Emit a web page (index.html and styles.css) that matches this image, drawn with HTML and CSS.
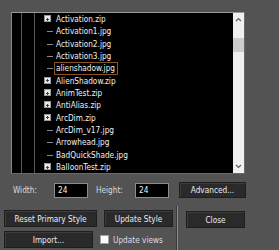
FILE: index.html
```html
<!DOCTYPE html>
<html lang="en">
<head>
    <meta charset="UTF-8">
    <title>Style Browser</title>
    <link rel="stylesheet" href="styles.css">
</head>
<body>
    <div class="panel">
        <div class="listbox">
            <ul class="tree">
                <li class="node folder"><span class="twist"></span><span class="name">Activation.zip</span></li>
                <li class="node"><span class="twist"></span><span class="name">Activation1.jpg</span></li>
                <li class="node"><span class="twist"></span><span class="name">Activation2.jpg</span></li>
                <li class="node"><span class="twist"></span><span class="name">Activation3.jpg</span></li>
                <li class="node selected"><span class="twist"></span><span class="name">alienshadow.jpg</span></li>
                <li class="node folder"><span class="twist"></span><span class="name">AlienShadow.zip</span></li>
                <li class="node folder"><span class="twist"></span><span class="name">AnimTest.zip</span></li>
                <li class="node folder"><span class="twist"></span><span class="name">AntiAlias.zip</span></li>
                <li class="node folder"><span class="twist"></span><span class="name">ArcDim.zip</span></li>
                <li class="node"><span class="twist"></span><span class="name">ArcDim_v17.jpg</span></li>
                <li class="node"><span class="twist"></span><span class="name">Arrowhead.jpg</span></li>
                <li class="node"><span class="twist"></span><span class="name">BadQuickShade.jpg</span></li>
                <li class="node folder"><span class="twist"></span><span class="name">BalloonTest.zip</span></li>
            </ul>
            <div class="scrollbar">
                <svg class="arrow" width="11" height="10" viewBox="0 0 11 10"><path d="M3 6 L5.5 3.5 L8 6" fill="none" stroke="#606060" stroke-width="1.2"/></svg>
                <div class="thumb"></div>
                <svg class="arrow down" width="11" height="10" viewBox="0 0 11 10"><path d="M3 4 L5.5 6.5 L8 4" fill="none" stroke="#606060" stroke-width="1.2"/></svg>
            </div>
        </div>

        <div class="size-row">
            <label class="lbl lbl-width">Width:</label>
            <div class="field">24</div>
            <label class="lbl lbl-height">Height:</label>
            <div class="field">24</div>
            <button class="btn btn-advanced">Advanced...</button>
        </div>

        <div class="actions">
            <div class="actions-left">
                <div class="row">
                    <button class="btn btn-reset">Reset Primary Style</button>
                    <button class="btn btn-update">Update Style</button>
                </div>
                <div class="row row-import">
                    <button class="btn btn-import">Import...</button>
                    <span class="check"></span>
                    <span class="check-label">Update views</span>
                </div>
            </div>
            <div class="separator"></div>
            <button class="btn btn-close">Close</button>
        </div>
    </div>
</body>
</html>
```

FILE: styles.css
```css
body {
    margin: 0;
    background-color: #535353;
    font-family: "DejaVu Sans Condensed", "DejaVu Sans", sans-serif;
    font-stretch: condensed;
    font-size: 8.2px;
    color: #f0f0f0;
    overflow: hidden;
}
.panel {
    padding-top: 12px;
}
.listbox {
    margin-left: 11px;
    width: 234px;
    height: 162px;
    box-sizing: border-box;
    border: 1px solid #6a6a6a;
    border-top-color: #9a9a9a;
    border-left-color: #8a8a8a;
    background-color: #000;
    display: flex;
}
.tree {
    flex: 1;
    list-style: none;
    margin: 0;
    padding: 0;
    background:
        linear-gradient(#585858, #585858) 9px 0 / 1px 100% no-repeat,
        linear-gradient(#585858, #585858) 22px 0 / 1px 100% no-repeat;
    overflow: hidden;
}
.node {
    height: 12.33px;
    line-height: 12.33px;
    padding-left: 32px;
    display: flex;
    align-items: center;
    white-space: nowrap;
}
.twist {
    width: 12px;
    height: 12px;
    flex: none;
    position: relative;
}
.twist::before {
    content: "";
    position: absolute;
    left: 3px;
    top: 6px;
    width: 6px;
    height: 1px;
    background-color: #8a8a8a;
}
.folder .twist::before {
    left: 0;
    top: 2px;
    width: 7px;
    height: 7px;
    box-sizing: border-box;
    background:
        linear-gradient(#3a3a6a, #3a3a6a) 1px 2.5px / 3px 1px no-repeat,
        linear-gradient(#3a3a6a, #3a3a6a) 2px 1.5px / 1px 3px no-repeat,
        #e8e8e8;
    border: 1px solid #9a9a9a;
}
.selected .name {
    border: 1px solid #8a5422;
    margin-left: -2px;
    padding: 0 2px 0 1px;
    line-height: 11px;
}
.scrollbar {
    width: 11px;
    flex: none;
    background-color: #f0f0f0;
    position: relative;
}
.arrow {
    display: block;
    margin-top: 2px;
}
.thumb {
    margin-top: 13px;
    height: 14px;
    background-color: #cdcdcd;
}
.arrow.down {
    position: absolute;
    bottom: 2px;
}
.size-row {
    display: flex;
    align-items: center;
    margin-top: 8px;
    height: 16px;
}
.lbl {
    color: #dadada;
}
.lbl-width {
    margin-left: 13px;
    width: 41px;
}
.lbl-height {
    margin-left: 8px;
    width: 39px;
}
.field {
    width: 34px;
    height: 15px;
    box-sizing: border-box;
    background-color: #000;
    border: 1px solid #8c8c8c;
    padding-left: 3px;
    line-height: 13px;
    color: #f0f0f0;
}
.btn {
    font: inherit;
    color: #eaecf4;
    background-color: #2a2a2a;
    border: 1px solid #1e1e1e;
    box-shadow: inset 1px 1px 0 #3c3c3c;
    height: 17px;
    padding: 0;
    box-sizing: border-box;
    cursor: pointer;
}
.btn:hover {
    background-color: #333;
}
.btn-advanced {
    margin-left: 10px;
    width: 67px;
    height: 16px;
}
.actions {
    display: flex;
    margin-top: 12px;
}
.actions-left {
    margin-left: 4px;
}
.row {
    display: flex;
    align-items: center;
}
.btn-reset {
    width: 93px;
}
.btn-update {
    margin-left: 7px;
    width: 69px;
}
.row-import {
    margin-top: 4px;
}
.btn-import {
    width: 89px;
}
.check {
    margin-left: 7px;
    width: 9px;
    height: 9px;
    box-sizing: border-box;
    background-color: #fafafa;
    border: 1px solid #a0a0a0;
}
.check-label {
    margin-left: 4px;
    color: #dcdce4;
}
.separator {
    margin-left: 3px;
    margin-top: -4px;
    width: 1px;
    height: 50px;
    border-left: 1px solid #3a3a3a;
    background-color: #8a8a8a;
}
.btn-close {
    margin-left: 8px;
    margin-top: 1px;
    width: 59px;
}
```
